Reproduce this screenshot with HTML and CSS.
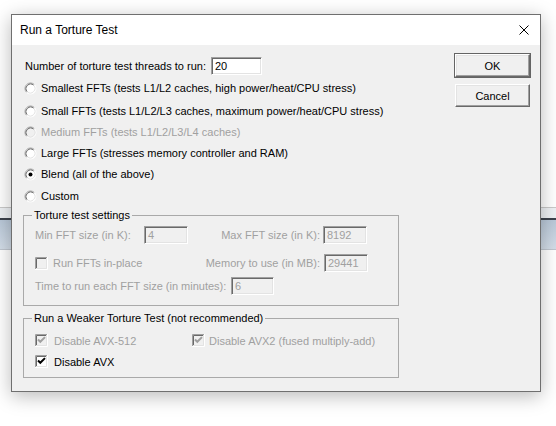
FILE: index.html
```html
<!DOCTYPE html>
<html>
<head>
<meta charset="utf-8">
<link rel="stylesheet" href="styles.css">
</head>
<body>
<svg class="defs" width="0" height="0">
  <defs>
    <symbol id="radio" viewBox="0 0 13 13">
      <circle cx="6.5" cy="6.5" r="5.5" fill="#fff"/>
      <path d="M2.61 10.39 A5.5 5.5 0 0 1 10.39 2.61" stroke="#a0a0a0" fill="none"/>
      <path d="M10.39 2.61 A5.5 5.5 0 0 1 2.61 10.39" stroke="#fff" fill="none"/>
      <path d="M3.32 9.68 A4.5 4.5 0 0 1 9.68 3.32" stroke="#696969" fill="none"/>
      <path d="M9.68 3.32 A4.5 4.5 0 0 1 3.32 9.68" stroke="#e3e3e3" fill="none"/>
    </symbol>
    <symbol id="radio-off" viewBox="0 0 13 13">
      <circle cx="6.5" cy="6.5" r="5.5" fill="#f0f0f0"/>
      <path d="M2.61 10.39 A5.5 5.5 0 0 1 10.39 2.61" stroke="#a0a0a0" fill="none"/>
      <path d="M10.39 2.61 A5.5 5.5 0 0 1 2.61 10.39" stroke="#fff" fill="none"/>
      <path d="M3.32 9.68 A4.5 4.5 0 0 1 9.68 3.32" stroke="#696969" fill="none"/>
      <path d="M9.68 3.32 A4.5 4.5 0 0 1 3.32 9.68" stroke="#e3e3e3" fill="none"/>
    </symbol>
    <symbol id="box" viewBox="0 0 13 13">
      <rect x="0" y="0" width="13" height="13" fill="#fff"/>
      <path d="M0.5 12.5 V0.5 H12.5" stroke="#a0a0a0" fill="none"/>
      <path d="M1.5 11.5 V1.5 H11.5" stroke="#696969" fill="none"/>
      <path d="M0 12.5 H12.5 V0" stroke="#fff" fill="none"/>
      <path d="M1 11.5 H11.5 V1" stroke="#e3e3e3" fill="none"/>
    </symbol>
    <symbol id="box-off" viewBox="0 0 13 13">
      <rect x="0" y="0" width="13" height="13" fill="#f0f0f0"/>
      <path d="M0.5 12.5 V0.5 H12.5" stroke="#a0a0a0" fill="none"/>
      <path d="M1.5 11.5 V1.5 H11.5" stroke="#696969" fill="none"/>
      <path d="M0 12.5 H12.5 V0" stroke="#fff" fill="none"/>
      <path d="M1 11.5 H11.5 V1" stroke="#e3e3e3" fill="none"/>
    </symbol>
  </defs>
</svg>

<div class="dialog">
  <div class="titlebar">
    <span class="title">Run a Torture Test</span>
    <svg class="close" width="10" height="10" viewBox="0 0 10 10">
      <path d="M0.5 0.5 L9.5 9.5 M9.5 0.5 L0.5 9.5" stroke="#000" stroke-width="1" fill="none"/>
    </svg>
  </div>
  <div class="content">
    <div class="main">
      <div class="threads">
        <span class="threads-label">Number of torture test threads to run:</span>
        <div class="field threads-field">20</div>
      </div>

      <div class="opt opt-first">
        <svg class="ctl" width="13" height="13"><use href="#radio"/></svg>
        <span>Smallest FFTs (tests L1/L2 caches, high power/heat/CPU stress)</span>
      </div>
      <div class="opt opt-small">
        <svg class="ctl" width="13" height="13"><use href="#radio"/></svg>
        <span>Small FFTs (tests L1/L2/L3 caches, maximum power/heat/CPU stress)</span>
      </div>
      <div class="opt disabled">
        <svg class="ctl" width="13" height="13"><use href="#radio-off"/></svg>
        <span>Medium FFTs (tests L1/L2/L3/L4 caches)</span>
      </div>
      <div class="opt">
        <svg class="ctl" width="13" height="13"><use href="#radio"/></svg>
        <span>Large FFTs (stresses memory controller and RAM)</span>
      </div>
      <div class="opt">
        <svg class="ctl" width="13" height="13"><use href="#radio"/><circle cx="6.5" cy="6.5" r="2" fill="#000"/></svg>
        <span>Blend (all of the above)</span>
      </div>
      <div class="opt opt-custom">
        <svg class="ctl" width="13" height="13"><use href="#radio"/></svg>
        <span>Custom</span>
      </div>

      <div class="group group-settings">
        <span class="legend">Torture test settings</span>
        <div class="grow grow-a disabled">
          <span class="lbl-min">Min FFT size (in K):</span>
          <div class="field field-off small-field">4</div>
          <span class="lbl-right">Max FFT size (in K):</span>
          <div class="field field-off small-field">8192</div>
        </div>
        <div class="grow grow-b disabled">
          <span class="chk chk-inplace">
            <svg class="ctl" width="13" height="13"><use href="#box-off"/></svg>
            <span>Run FFTs in-place</span>
          </span>
          <span class="lbl-right">Memory to use (in MB):</span>
          <div class="field field-off small-field mem-field">29441</div>
        </div>
        <div class="grow grow-c disabled">
          <span class="lbl-time">Time to run each FFT size (in minutes):</span>
          <div class="field field-off time-field">6</div>
        </div>
      </div>

      <div class="group group-weak">
        <span class="legend">Run a Weaker Torture Test (not recommended)</span>
        <div class="crow crow-a disabled">
          <span class="chk chk-512">
            <svg class="ctl" width="13" height="13"><use href="#box-off"/><path d="M3 5.5 L5.3 7.8 L10 3.1" stroke="#a0a0a0" stroke-width="2" fill="none"/></svg>
            <span>Disable AVX-512</span>
          </span>
          <span class="chk chk-avx2">
            <svg class="ctl" width="13" height="13"><use href="#box-off"/><path d="M3 5.5 L5.3 7.8 L10 3.1" stroke="#a0a0a0" stroke-width="2" fill="none"/></svg>
            <span>Disable AVX2 (fused multiply-add)</span>
          </span>
        </div>
        <div class="crow crow-b">
          <span class="chk chk-512">
            <svg class="ctl" width="13" height="13"><use href="#box"/><path d="M3 5.5 L5.3 7.8 L10 3.1" stroke="#000" stroke-width="2" fill="none"/></svg>
            <span>Disable AVX</span>
          </span>
        </div>
      </div>
    </div>

    <div class="buttons">
      <button class="btn btn-default">OK</button>
      <button class="btn btn-cancel">Cancel</button>
    </div>
  </div>
</div>
</body>
</html>
```

FILE: styles.css
```css
* { box-sizing: border-box; }

html, body {
  margin: 0;
  width: 556px;
  height: 426px;
  overflow: hidden;
}

body {
  padding: 14px 0 0 11px;
  font-family: "Liberation Sans", Arial, sans-serif;
  font-size: 11px;
  color: #000;
  background:
    linear-gradient(to bottom,
      #ffffff 0, #ffffff 207px,
      #c9c9c9 207px, #c9c9c9 208px,
      #eef1f4 208px, #eef1f4 218px,
      #3c424c 218px, #3c424c 220px,
      #b9c8d8 220px, #d3dde8 249px,
      #bfc6cf 249px, #bfc6cf 250px,
      #ffffff 250px, #ffffff 100%);
}

.defs { position: absolute; width: 0; height: 0; }

.dialog {
  width: 530px;
  height: 378px;
  border: 1px solid #6f6f6f;
  background: #f0f0f0;
  box-shadow: 0 4px 18px rgba(0, 0, 0, 0.28);
  display: flex;
  flex-direction: column;
}

.titlebar {
  height: 30px;
  background: #fff;
  display: flex;
  align-items: center;
  justify-content: space-between;
  padding: 0 11px 0 8px;
}

.title {
  font-size: 12px;
  font-family: "Liberation Sans", Arial, sans-serif;
}

.close { display: block; }

.content {
  display: flex;
  flex: 1;
}

.main {
  width: 443px;
  padding: 12px 0 0 13px;
  display: flex;
  flex-direction: column;
}

.threads {
  display: flex;
  align-items: center;
  height: 18px;
}

.threads-label { width: 186px; }

.field {
  height: 18px;
  background: #fff;
  border: 1px solid;
  border-color: #a0a0a0 #fff #fff #a0a0a0;
  box-shadow: inset 1px 1px #696969, inset -1px -1px #e3e3e3;
  padding: 0 3px;
  line-height: 16px;
  color: #000;
}

.field-off {
  background: #f0f0f0;
  color: #a0a0a0;
}

.threads-field { width: 51px; }
.small-field { width: 44px; }
.time-field { width: 43px; }

.ctl { display: block; flex: none; }

.opt {
  display: flex;
  align-items: center;
  height: 16px;
  margin-top: 5px;
  margin-left: -1px;
  gap: 4px;
}

.opt-small { margin-top: 7px; }
.opt-custom { margin-top: 6px; }

.disabled { color: #a0a0a0; }

.group {
  margin-left: -2px;
  width: 376px;
  border: 1px solid #a9a9a9;
  padding: 0 0 0 11px;
  display: flex;
  flex-direction: column;
}

.legend {
  display: block;
  align-self: flex-start;
  margin: -7px 0 0 -3px;
  padding: 0 2px;
  line-height: 13px;
  background: #f0f0f0;
  color: #000;
}

.group-settings {
  margin-top: 11px;
  padding-bottom: 10px;
}

.grow {
  display: flex;
  align-items: center;
  height: 18px;
}

.grow-a { margin-top: 4px; }
.grow-b { margin-top: 10px; }
.grow-c { margin-top: 5px; }

.lbl-min { width: 109px; }
.lbl-right {
  width: 132px;
  text-align: right;
  margin-right: 3px;
}
.grow-b .lbl-right { margin-right: 4px; }
.lbl-time { width: 196px; }

.chk {
  display: flex;
  align-items: center;
}

.chk-inplace { width: 153px; gap: 5px; }

.group-weak {
  margin-top: 12px;
  padding-bottom: 9px;
}

.crow {
  display: flex;
  align-items: center;
  height: 13px;
}

.crow-a { margin-top: 9px; }
.crow-b { margin-top: 8px; }

.chk-512 { width: 157px; gap: 6px; }
.chk-avx2 { gap: 4px; }

.buttons {
  width: 75px;
  margin-right: 10px;
  padding-top: 9px;
  display: flex;
  flex-direction: column;
  gap: 7px;
}

.btn {
  width: 75px;
  height: 23px;
  padding: 0;
  font-family: "Liberation Sans", Arial, sans-serif;
  font-size: 11px;
  color: #000;
  background: #f0f0f0;
  border: 1px solid;
  border-color: #fff #696969 #696969 #fff;
  box-shadow: inset -1px -1px #a0a0a0, inset 1px 1px #e3e3e3;
}

.btn-default {
  outline: 1px solid #646464;
  outline-offset: 0;
  border-color: #fff #696969 #696969 #fff;
}
```
